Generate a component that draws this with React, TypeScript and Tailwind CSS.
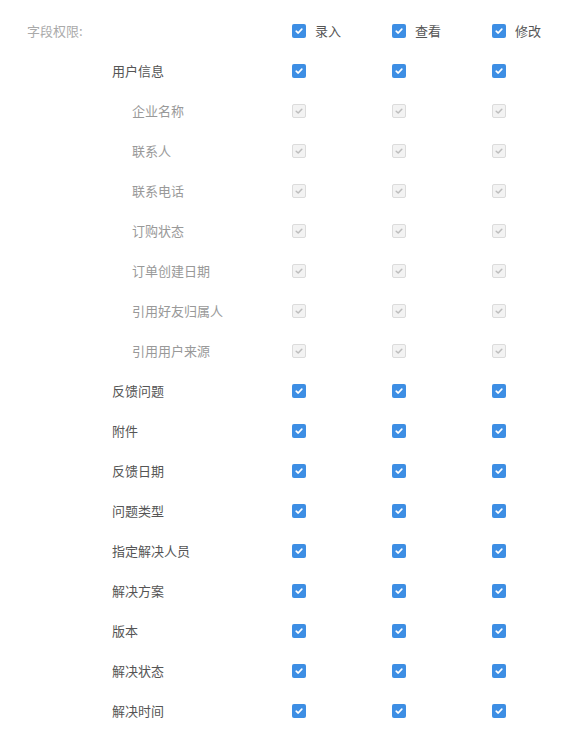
import React from "react";

type Row = { name: string; sub?: boolean };

const rows: Row[] = [
  { name: "用户信息" },
  { name: "企业名称", sub: true },
  { name: "联系人", sub: true },
  { name: "联系电话", sub: true },
  { name: "订购状态", sub: true },
  { name: "订单创建日期", sub: true },
  { name: "引用好友归属人", sub: true },
  { name: "引用用户来源", sub: true },
  { name: "反馈问题" },
  { name: "附件" },
  { name: "反馈日期" },
  { name: "问题类型" },
  { name: "指定解决人员" },
  { name: "解决方案" },
  { name: "版本" },
  { name: "解决状态" },
  { name: "解决时间" },
];

function Box({ disabled }: { disabled?: boolean }) {
  if (disabled) {
    return (
      <span className="flex h-[14px] w-[14px] shrink-0 items-center justify-center rounded-[2px] border border-[#dcdcdc] bg-[#f3f3f3]">
        <svg width="10" height="10" viewBox="0 0 10 10">
          <path d="M2.2 5.2 L4.2 7 L7.8 3.2" fill="none" stroke="#bdbdbd" strokeWidth="1.5" strokeLinecap="round" strokeLinejoin="round" />
        </svg>
      </span>
    );
  }
  return (
    <span className="flex h-[14px] w-[14px] shrink-0 items-center justify-center rounded-[2px] bg-[#3d8ee4]">
      <svg width="10" height="10" viewBox="0 0 10 10">
        <path d="M2.2 5.2 L4.2 7 L7.8 3.2" fill="none" stroke="#ffffff" strokeWidth="1.7" strokeLinecap="round" strokeLinejoin="round" />
      </svg>
    </span>
  );
}

export default function App() {
  return (
    <div
      className="min-h-[748px] w-[584px] bg-white pt-[11px] text-[13px]"
      style={{ fontFamily: '"Noto Sans CJK SC", "Noto Sans", sans-serif' }}
    >
      <div className="flex h-[40px] items-center">
        <div className="w-[292px] shrink-0 pl-[27px] text-[#aaaaaa]">字段权限:</div>
        {["录入", "查看", "修改"].map((t) => (
          <div key={t} className="flex w-[100px] shrink-0 items-center">
            <Box />
            <span className="ml-[9px] text-[#555555]">{t}</span>
          </div>
        ))}
      </div>
      {rows.map((r) => (
        <div key={r.name} className="flex h-[40px] items-center">
          <div
            className={
              "w-[292px] shrink-0 " +
              (r.sub ? "pl-[132px] text-[#999999]" : "pl-[112px] text-[#555555]")
            }
          >
            {r.name}
          </div>
          {[0, 1, 2].map((i) => (
            <div key={i} className="flex w-[100px] shrink-0 items-center">
              <Box disabled={r.sub} />
            </div>
          ))}
        </div>
      ))}
    </div>
  );
}
